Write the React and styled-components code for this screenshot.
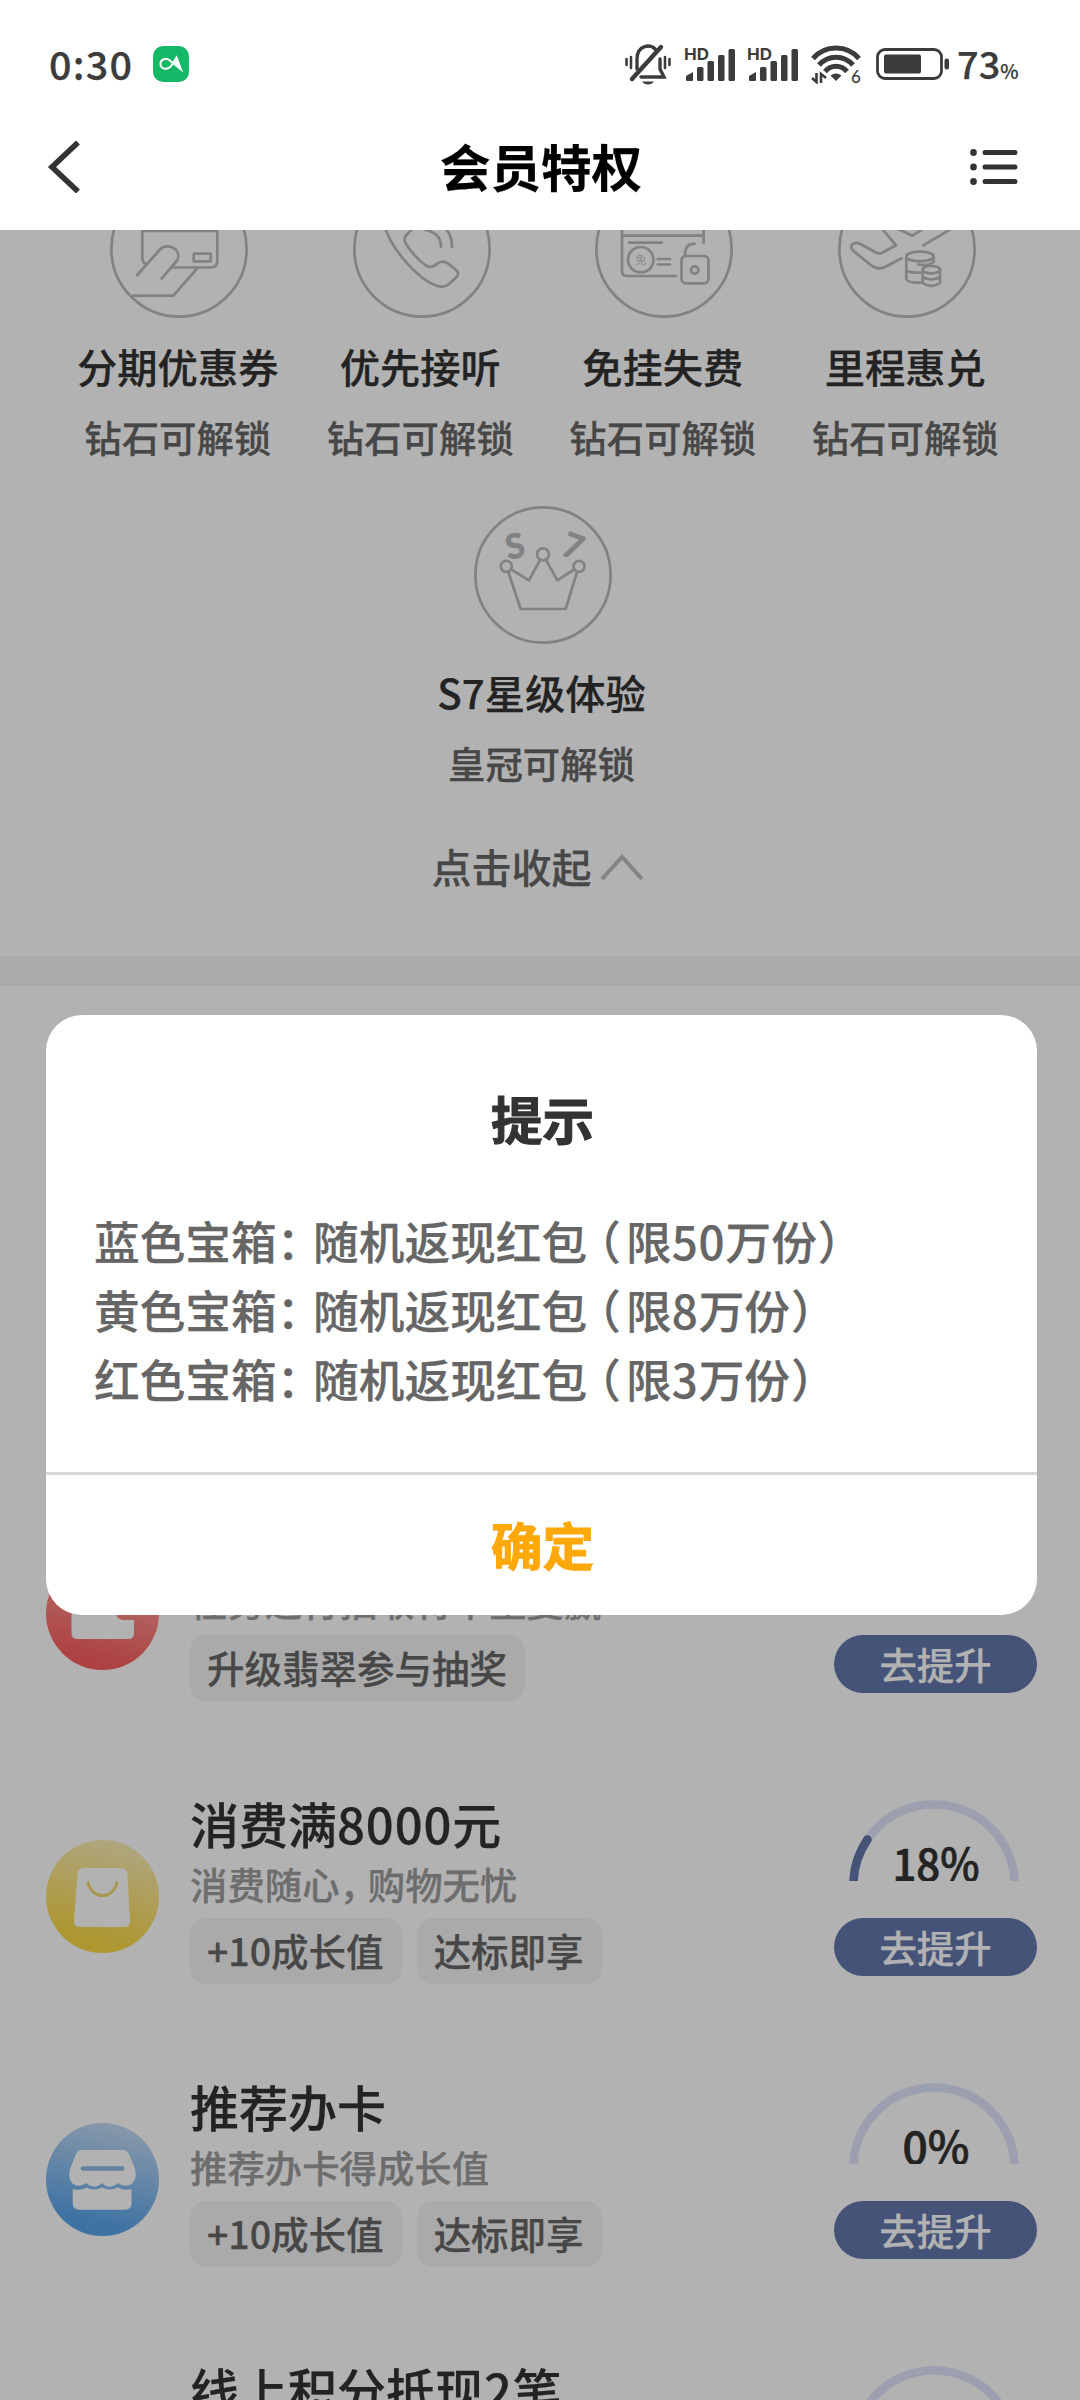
import React from "react";
import styled, { createGlobalStyle } from "styled-components";

const GlobalStyle = createGlobalStyle`
  * {
    box-sizing: border-box;
  }
  body {
    margin: 0;
    background-color: #ffffff;
    font-family: "Noto Sans CJK SC", "Noto Sans", sans-serif;
    font-weight: 500;
    color: #333333;
    -webkit-text-stroke: 0.25px;
  }
  p, h1, h2, h3 {
    margin: 0;
  }
  button {
    font-family: inherit;
    border: 0;
    padding: 0;
  }
`;

const benefits = [
  { title: "分期优惠券", lock: "钻石可解锁", icon: "card" },
  { title: "优先接听", lock: "钻石可解锁", icon: "phone" },
  { title: "免挂失费", lock: "钻石可解锁", icon: "loss" },
  { title: "里程惠兑", lock: "钻石可解锁", icon: "miles" },
  { title: "S7星级体验", lock: "皇冠可解锁", icon: "crown" },
];

const tasks = [
  {
    icon: "wallet",
    title: "",
    desc: "任务进行抽取将不重复赢",
    chips: ["升级翡翠参与抽奖"],
    percent: null,
  },
  {
    icon: "bag",
    title: "消费满8000元",
    desc: "消费随心，购物无忧",
    chips: ["+10成长值", "达标即享"],
    percent: 18,
  },
  {
    icon: "shop",
    title: "推荐办卡",
    desc: "推荐办卡得成长值",
    chips: ["+10成长值", "达标即享"],
    percent: 0,
  },
  { icon: "", title: "线上积分抵现2笔", desc: "", chips: [], percent: 0 },
];

const prizes = [
  { box: "蓝色宝箱", limit: "限50万份" },
  { box: "黄色宝箱", limit: "限8万份" },
  { box: "红色宝箱", limit: "限3万份" },
];

const BellOff = () => (
  <svg width="48" height="42" viewBox="0 0 48 42" fill="none" stroke="#3c3c3c" strokeWidth="3.4" strokeLinecap="round">
    <path d="M2.5 16v6M7 14v11M41 14v11M45.500 16v6" strokeWidth="2.600" />
    <path d="M13 26V16C13 2 27 0 32 7" />
    <path d="M8 36L37 4" strokeWidth="4.400" />
    <path d="M36 16v10l4 8H17" />
    <path d="M18 38.500h12q-2 3-6 3t-6-3z" fill="#3c3c3c" stroke="none" />
  </svg>
);

const Signal = () => (
  <svg width="52" height="36" viewBox="0 0 52 36" fill="#3c3c3c">
    <text x="0" y="13.500" fontFamily="Inter, sans-serif" fontSize="16.500" fontWeight="700" textLength="25" lengthAdjust="spacingAndGlyphs">HD</text>
    <path d="M2 34v-4l7-4v8q0 1-1 1H3q-1 0-1-1z" />
    <rect x="13" y="21" width="6.500" height="14" rx="1.500" />
    <rect x="23.500" y="15" width="6.500" height="20" rx="1.500" />
    <rect x="34" y="9" width="6.500" height="26" rx="1.500" />
    <rect x="44.500" y="3" width="6.500" height="32" rx="1.500" />
  </svg>
);

const Wifi = () => (
  <svg width="50" height="40" viewBox="0 0 50 40" fill="none" stroke="#3c3c3c" strokeWidth="5">
    <path d="M2 14.500C14 .500 36 .500 48 14.500" />
    <path d="M8 21C17 10.500 33 10.500 42 21" />
    <path d="M14 27.500C20 20.500 30 20.500 36 27.500" />
    <path d="M19.500 31.500q5.500-4 11 0L25 37z" fill="#3c3c3c" stroke="none" />
    <path d="M5.500 29v9L1 34M10 39v-9l5 4" strokeWidth="2.600" />
    <text x="40" y="39" fill="#3c3c3c" stroke="none" fontFamily="Lato, sans-serif" fontSize="17">6</text>
  </svg>
);

const Battery = () => (
  <svg width="74" height="32" viewBox="0 0 74 32" fill="none">
    <rect x="1.500" y="1.500" width="64" height="29" rx="7.500" stroke="#3c3c3c" strokeWidth="2.800" />
    <rect x="8" y="6.500" width="37" height="19" rx="2" fill="#3c3c3c" />
    <rect x="68.500" y="10.500" width="4.500" height="11" rx="2" fill="#3c3c3c" />
  </svg>
);

const benefitDrawings = {
  card: (
    <>
      <path d="M35.700 84.300Q32.300 82 32.300 77V51H107.300V81q0 6.500-6.500 6.500H63" />
      <rect x="83.700" y="73.700" width="17" height="7.600" />
      <path d="M27.300 95L50 69.500C57 62 72 69 67.500 80L51.700 98.500" />
      <path d="M23.300 115.700H63.300L86.700 89" />
    </>
  ),
  phone: (
    <>
      <path d="M32.500 49C40 71 66 100 83 105.500Q91 108.500 96 104L103.500 97Q107 93 102.500 89.500L95 83.500Q90 80 85 83Q79 89 73 85.500Q62 78 53 64Q50 59 53.500 55L59 49" />
      <path d="M72 50Q88 53 88 66.700M93 49Q99 56 99 66.700" />
    </>
  ),
  loss: (
    <>
      <path d="M27 48V91q0 5 5 5H81M27 55.700H108.700M108.700 48V62.700" />
      <path d="M34 62.700H66.700M62.700 79H75M62.700 84.500H75" />
      <circle cx="45.700" cy="79.700" r="12.700" />
      <text x="45.700" y="83.500" textAnchor="middle" fontSize="11" fill="#d0d0d0" stroke="none">免</text>
      <rect x="86.500" y="76" width="27" height="27.300" rx="4.500" />
      <circle cx="99.700" cy="90" r="3.700" />
      <path d="M90 76V73Q90.500 64 99.500 63.700" />
    </>
  ),
  miles: (
    <>
      <path d="M44.700 49.500L58 65.300L43.700 73Q41 74 38 72.500L22 63.800C15 61 11 66 15 70.500L32 84.500Q40 91 48 86.500L63.700 78.300" />
      <path d="M61 49.500L74.300 55.700L84.500 49M112 49.500L85.300 65.300" />
      <ellipse cx="82" cy="76.500" rx="13.700" ry="4.800" />
      <path d="M68.300 76.500V99q1 4 14 3.700M68.300 90q1 3 14 2.500M95.700 76.500V82Q90 86 80 84.500" />
      <ellipse cx="93.300" cy="89.700" rx="8.700" ry="3.700" />
      <path d="M84.600 89.700V103q8.700 6 17.400 0V89.700M84.600 97q8.700 5 17.400 0" />
    </>
  ),
  crown: (
    <>
      <circle cx="32.300" cy="60.300" r="5.500" />
      <circle cx="69" cy="48.300" r="6" />
      <circle cx="105" cy="60.300" r="5.500" />
      <path d="M34.300 66L46.700 103H91.700L103 66M37.300 63.500L55 74.300L66 54M72 54L83.300 74.300L100 63.500" />
      <g fill="#bbbbbb" strokeWidth="0.800" fontFamily="Lato, sans-serif" fontSize="34" fontWeight="700" textAnchor="middle">
        <text x="41" y="52" transform="rotate(-12 41 40)">S</text>
        <text x="99" y="52.500" transform="rotate(20 99 40)">7</text>
      </g>
    </>
  ),
};

const BenefitIcon = ({ name }) => (
  <svg width="138" height="138" viewBox="0 0 138 138" fill="none" stroke="#bbbbbb" strokeWidth="2.700" strokeLinecap="round" strokeLinejoin="round">
    <circle cx="69" cy="69" r="67.600" />
    {benefitDrawings[name]}
  </svg>
);

const taskDrawings = {
  wallet: {
    colors: ["#ffb0aa", "#fa5f5f"],
    shape: (
      <path
        fill="#fff"
        d="M31.500 30H82q6 0 6 6v6H77q-8 0-8 10t8 11h11V76q0 6-6 6H31.500q-6 0-6-6V36q0-6 6-6z"
      />
    ),
  },
  bag: {
    colors: ["#fbeeb8", "#f8d846"],
    shape: (
      <>
        <path fill="#fff" d="M38 28H75q6 0 6.500 6L84 81q0 6-6 6H34q-6 0-6-6L31.500 34q.500-6 6.500-6z" />
        <path fill="none" stroke="#f2d973" strokeWidth="2.800" strokeLinecap="round" d="M42 42.500C46 60 67 60 71 42.500" />
      </>
    ),
  },
  shop: {
    colors: ["#c6dcf4", "#58a4ea"],
    shape: (
      <>
        <path fill="#fff" d="M36 27H77q4 0 6 4l6 15c4 14-8 21-17 14-6 5-11 5-16 0-5 5-10 5-16 0-9 7-20 0-16-14l6-15q2-4 6-4z" />
        <path fill="#fff" d="M26.700 66q7 2 14-1.500 7.500 4 15.300 0 8 4 15.500 0 7 3.500 14 1.500V80q0 6.700-6.700 6.700H33.400q-6.700 0-6.700-6.700z" />
        <path stroke="#8fbce6" strokeWidth="4.600" strokeLinecap="round" d="M37 45.500H76" />
      </>
    ),
  },
};

const TaskIcon = ({ name }) => {
  const drawing = taskDrawings[name];
  if (!drawing) return <svg width="113" height="113" />;
  return (
    <svg width="113" height="113" viewBox="0 0 113 113">
      <defs>
        <linearGradient id={name} x1="0.650" y1="0" x2="0.400" y2="1">
          <stop offset="0" stopColor={drawing.colors[0]} />
          <stop offset="0.900" stopColor={drawing.colors[1]} />
        </linearGradient>
      </defs>
      <circle cx="56.500" cy="56.500" r="56.500" fill={`url(#${name})`} />
      {drawing.shape}
    </svg>
  );
};

const Gauge = ({ percent }) => {
  // the fill runs clockwise from the left end of the half circle
  const angle = (percent / 100) * Math.PI * 1.06;
  const x = 85 - 80.6 * Math.cos(angle);
  const y = 85 - 80.6 * Math.sin(angle);
  return (
    <GaugeSvg width="170" height="81" viewBox="0 0 170 81" fill="none" strokeWidth="8.600" strokeLinecap="round">
      <path d="M4.400 85a80.600 80.600 0 0 1 161.200 0" stroke="#dfe4fc" />
      {percent > 0 && <path d={`M4.400 85A80.600 80.600 0 0 1 ${x} ${y}`} stroke="#6378ac" />}
      <text
        x="87"
        y="80.500"
        textAnchor="middle"
        fill="#333"
        stroke="#333"
        strokeWidth="0.700"
        fontSize="44.500"
        textLength={percent > 9 ? 87 : 67}
        lengthAdjust="spacingAndGlyphs"
      >
        {percent}%
      </text>
    </GaugeSvg>
  );
};

// numbers are set a little wider than the Chinese text around them
const Numbered = ({ text }) =>
  text
    .split(/(\d+)/)
    .map((part, i) => (i % 2 ? <Digits key={i}>{part}</Digits> : part));

const App = () => {
  return (
    <Page>
      <GlobalStyle />
      <StatusBar>
        <Time>0:30</Time>
        <AppBadge>
          <svg width="36" height="37" viewBox="0 0 36 37" fill="none" stroke="#fff" strokeWidth="2">
            <path d="M18 15.500C13 10 7 14 7.500 18.500s7 6.500 11 1l5-8 4.500 12-10-8" />
            <path d="M22.500 12.500l6 11-7-6z" fill="#fff" stroke="none" />
          </svg>
        </AppBadge>
        <StatusIcons>
          <BellOff />
          <Signal />
          <Signal />
          <Wifi />
          <Battery />
        </StatusIcons>
        <Level>
          73<small>%</small>
        </Level>
      </StatusBar>
      <NavBar>
        <svg width="34" height="52" viewBox="0 0 34 52" fill="none" stroke="#333" strokeWidth="5.600">
          <path d="M31 1.500L5 26L31 50.500" />
        </svg>
        <h1>会员特权</h1>
        <svg width="48" height="36" viewBox="0 0 48 36" stroke="#333" strokeWidth="5" strokeLinecap="round">
          <path d="M15 3.500H45M15 18H45M15 32.500H45" />
          <path d="M3.500 3.300v.400M3.500 17.800v.400M3.500 32.300v.400" strokeWidth="6.600" />
        </svg>
      </NavBar>
      <Content>
        <BenefitList>
          {benefits.map((b) => (
            <Benefit key={b.title}>
              <BenefitIcon name={b.icon} />
              <h3>{b.title}</h3>
              <p>{b.lock}</p>
            </Benefit>
          ))}
        </BenefitList>
        <Collapse>
          点击收起
          <svg width="44" height="28" viewBox="0 0 44 28" fill="none" stroke="#bdbdbd" strokeWidth="4">
            <path d="M2 26L22 4L42 26" />
          </svg>
        </Collapse>
        <Divider />
        <TaskList>
          {tasks.map((t) => (
            <Task key={t.desc}>
              <TaskIcon name={t.icon} />
              <TaskBody>
                <h2>
                  <Numbered text={t.title} />
                </h2>
                <p>
                  {t.desc.split("，").map((part, i) => (
                    <React.Fragment key={part}>
                      {i > 0 && <Comma>，</Comma>}
                      {part}
                    </React.Fragment>
                  ))}
                </p>
                <Chips>
                  {t.chips.map((c) => (
                    <Chip key={c}>{c}</Chip>
                  ))}
                </Chips>
              </TaskBody>
              <TaskSide>
                {t.percent === null ? <EmptyGauge /> : <Gauge percent={t.percent} />}
                <RaiseButton>去提升</RaiseButton>
              </TaskSide>
            </Task>
          ))}
        </TaskList>
        <Overlay>
          <Modal>
            <ModalTitle>提示</ModalTitle>
            <ModalText>
              {prizes.map((p) => (
                <p key={p.box}>
                  {p.box}
                  <Colon>：</Colon>随机返现红包<OpenParen>（</OpenParen>
                  <Numbered text={p.limit} />
                  <CloseParen>）</CloseParen>
                </p>
              ))}
            </ModalText>
            <ConfirmButton>确定</ConfirmButton>
          </Modal>
        </Overlay>
      </Content>
    </Page>
  );
};

const Page = styled.div`
  display: flex;
  flex-direction: column;
  width: 1080px;
  height: 2400px;
  overflow: hidden;
`;

const StatusBar = styled.div`
  display: flex;
  align-items: center;
  height: 104px;
  padding: 24px 61px 0 49px;
  color: #3c3c3c;
`;

const Time = styled.span`
  width: 104px;
  padding-bottom: 4px;
  font-size: 39.5px;
  letter-spacing: 1.2px;
`;

const AppBadge = styled.div`
  width: 36px;
  height: 36px;
  border-radius: 10px;
  background-color: #14b866;
`;

const StatusIcons = styled.div`
  display: grid;
  grid-template-columns: 60px 63px 64px 65px 74px;
  align-items: center;
  margin-left: auto;
`;

const Level = styled.span`
  display: flex;
  align-items: baseline;
  width: 62px;
  margin-left: 7px;
  padding-bottom: 4px;
  font-size: 38px;
  small {
    font-size: 19.5px;
  }
`;

const NavBar = styled.div`
  display: grid;
  grid-template-columns: 48px 1fr 48px;
  align-items: center;
  height: 126px;
  padding: 0 62px 0 47px;
  h1 {
    padding: 0 0 4px 17px;
    font-size: 50.5px;
    font-weight: 700;
    line-height: 60px;
    text-align: center;
    color: #000000;
  }
`;

const Content = styled.div`
  position: relative;
  height: 2170px;
  overflow: hidden;
`;

const BenefitList = styled.div`
  display: flex;
  flex-wrap: wrap;
  justify-content: center;
  margin-top: -50px;
  padding: 0 52px 0 58px;
`;

const Benefit = styled.div`
  display: flex;
  flex-direction: column;
  align-items: center;
  width: 25%;
  height: 326px;
  h3 {
    margin-top: 18px;
    padding-right: 3px;
    font-size: 40.3px;
    font-weight: 500;
    line-height: 60px;
  }
  p {
    margin-top: 16px;
    padding-right: 3px;
    font-size: 37.4px;
    line-height: 50px;
    color: #666666;
    white-space: nowrap;
  }
`;

const Collapse = styled.div`
  display: flex;
  justify-content: center;
  align-items: center;
  gap: 8px;
  height: 124px;
  padding: 0 5px 56px 0;
  font-size: 40px;
  line-height: 68px;
  color: #666666;
  svg {
    margin-top: 2px;
  }
`;

const Divider = styled.div`
  height: 30px;
  background-color: #f4f4f4;
`;

const TaskList = styled.div`
  padding: 531px 43px 0 46px;
`;

const Task = styled.div`
  display: flex;
  align-items: flex-start;
  height: 283px;
  > svg {
    margin-top: 40px;
  }
`;

const TaskBody = styled.div`
  flex: 1;
  margin-left: 31px;
  h2 {
    height: 52px;
    font-size: 49px;
    font-weight: 500;
    line-height: 46px;
    white-space: nowrap;
  }
  p {
    height: 46px;
    margin-top: 10px;
    font-size: 37.4px;
    line-height: 44px;
    color: #9c9c9c;
  }
`;

const Digits = styled.span`
  letter-spacing: 0.018em;
`;

const Comma = styled.span`
  margin-right: 9.5px;
  font-feature-settings: "halt";
`;

const Chips = styled.div`
  display: flex;
  gap: 15px;
  margin-top: 10px;
`;

const Chip = styled.span`
  height: 66px;
  padding: 0 18px 0 17px;
  border-radius: 16px;
  background-color: #f4f4f4;
  font-size: 37.5px;
  line-height: 64px;
  color: #666666;
`;

const TaskSide = styled.div`
  display: flex;
  flex-direction: column;
  align-items: flex-start;
  width: 203px;
`;

const GaugeSvg = styled.svg`
  margin-left: 15px;
`;

const EmptyGauge = styled.div`
  height: 81px;
`;

const RaiseButton = styled.button`
  width: 203px;
  height: 58px;
  margin-top: 37px;
  border-radius: 29px;
  background-color: #6378ac;
  font-size: 37.4px;
  font-weight: 500;
  line-height: 54px;
  color: #ffffff;
`;

const Overlay = styled.div`
  position: absolute;
  inset: 0;
  display: flex;
  justify-content: center;
  align-items: center;
  padding-left: 3px;
  background-color: rgba(0, 0, 0, 0.3);
`;

const Modal = styled.div`
  display: flex;
  flex-direction: column;
  width: 991px;
  height: 600px;
  border-radius: 36px;
  background-color: #ffffff;
`;

const ModalTitle = styled.h2`
  margin-top: 68px;
  padding-left: 2px;
  font-size: 51.5px;
  font-weight: 700;
  line-height: 70px;
  text-align: center;
  -webkit-text-stroke: 1px;
`;

const ModalText = styled.div`
  flex: 1;
  padding: 53px 48px 0;
  font-size: 45.7px;
  line-height: 69px;
  color: #666666;
`;

const Colon = styled.span`
  margin-right: 13.5px;
  font-feature-settings: "halt";
`;

const OpenParen = styled.span`
  margin: 0 5px 0 11px;
  font-feature-settings: "halt";
`;

const CloseParen = styled.span`
  margin-left: 1px;
`;

const ConfirmButton = styled.button`
  height: 143px;
  padding: 0 0 4px 2px;
  border-top: 3px solid #d8d8d8;
  border-radius: 0;
  background-color: transparent;
  font-size: 51.5px;
  font-weight: 700;
  color: #ffa80a;
  -webkit-text-stroke: 1px;
`;

export default App;
